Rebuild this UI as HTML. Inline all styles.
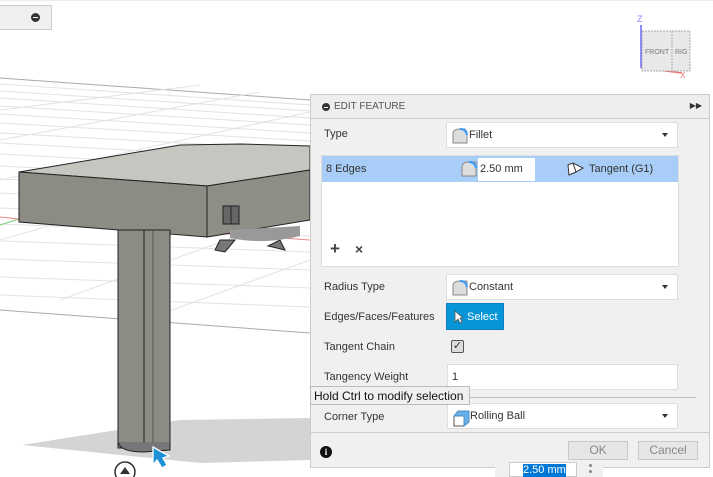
<!DOCTYPE html>
<html><head><style>
*{margin:0;padding:0;box-sizing:border-box}
body{width:713px;height:477px;overflow:hidden;background:#fff;font-family:"Liberation Sans",Arial,sans-serif;font-size:11px;color:#333;position:relative}
.a{position:absolute}
.lbl{position:absolute;left:13px;font-size:11px;color:#333}
.dd{position:absolute;left:135px;width:232px;height:26px;background:#fff;border:1px solid #ddd;}
.dd .t{position:absolute;left:22px;top:6px}
.dd .ar{position:absolute;right:9px;top:10px;width:0;height:0;border-left:3px solid transparent;border-right:3px solid transparent;border-top:4px solid #333}
.ic{position:absolute;left:5px;top:5px}
.btn{position:absolute;top:441px;height:19px;border:1px solid #c8c8c8;background:#e6e6e6;color:#888;font-size:12px;text-align:center;line-height:17px}
</style></head><body>
<svg class="a" style="left:0;top:0" width="713" height="477">
<rect x="0" y="0" width="713" height="1" fill="#eee"/>
<g stroke="#e2e2e2" stroke-width="1">
<line x1="0" y1="78" x2="310" y2="100" stroke="#aaa"/>
<line x1="0" y1="84" x2="310" y2="105"/><line x1="0" y1="91" x2="310" y2="111"/><line x1="0" y1="98" x2="310" y2="118"/><line x1="0" y1="106" x2="310" y2="125"/><line x1="0" y1="114" x2="310" y2="133"/><line x1="0" y1="123" x2="310" y2="141"/><line x1="0" y1="133" x2="310" y2="150"/><line x1="0" y1="143" x2="310" y2="160"/><line x1="0" y1="154" x2="310" y2="171"/><line x1="0" y1="166" x2="310" y2="182"/><line x1="0" y1="179" x2="310" y2="194"/><line x1="0" y1="193" x2="310" y2="207"/><line x1="0" y1="208" x2="310" y2="221"/><line x1="0" y1="224" x2="310" y2="236"/><line x1="0" y1="241" x2="310" y2="252"/><line x1="0" y1="259" x2="310" y2="270"/><line x1="0" y1="277" x2="310" y2="288"/><line x1="0" y1="295" x2="310" y2="307"/>
<line x1="0" y1="110" x2="200" y2="85"/><line x1="0" y1="140" x2="260" y2="92"/><line x1="0" y1="180" x2="310" y2="112"/><line x1="0" y1="240" x2="310" y2="150"/><line x1="60" y1="300" x2="310" y2="210"/><line x1="150" y1="318" x2="310" y2="260"/>
<line x1="0" y1="310" x2="310" y2="333" stroke="#aaa"/>
</g>
<line x1="0" y1="225" x2="19" y2="219" stroke="#7c7"/>
<line x1="0" y1="217" x2="19" y2="219" stroke="#e88"/>
<line x1="215" y1="233" x2="310" y2="240" stroke="#e88"/>
<polygon points="22,445 180,420 310,418 310,460 200,463" fill="#d4d4d4"/>
<polygon points="19,172 180,145 240,144 310,146 310,170 207,186" fill="#c6c6c0" stroke="#222"/>
<polygon points="19,172 207,186 207,237 19,222" fill="#8c8b84" stroke="#222"/>
<polygon points="207,186 310,170 310,220 207,237" fill="#8e8d86" stroke="#222"/>
<rect x="223" y="206" width="16" height="18" fill="#666" stroke="#222"/>
<line x1="231" y1="206" x2="231" y2="224" stroke="#222"/>
<path d="M215,250 L220,240 L235,240 L225,252 Z M268,246 L280,240 L285,250 Z" fill="#777" stroke="#222"/>
<path d="M230,238 Q265,245 300,236 L300,226 L230,230Z" fill="#999"/>
<rect x="118" y="230" width="52" height="218" fill="#8c8b84" stroke="#222"/>
<line x1="144" y1="230" x2="144" y2="450" stroke="#222"/>
<line x1="153" y1="230" x2="153" y2="450" stroke="#555"/>
<path d="M118,442 Q120,452 144,452 L170,450 Q170,444 170,442" fill="#777" stroke="#222"/>
<path d="M153,447 L153,465 L157,460 L162,468 L167,465 L163,458 L169,456 Z" fill="#1e90d6" stroke="#fff" stroke-width="1.3"/>
<circle cx="125" cy="472" r="10" fill="#fff" stroke="#333" stroke-width="1.5"/>
<path d="M120,474 L125,467 L130,474Z" fill="#333"/>
<line x1="641" y1="25" x2="641" y2="68" stroke="#66f" stroke-width="1.5"/>
<text x="637" y="22" font-size="9" fill="#88f" font-family="Liberation Sans">Z</text>
<line x1="641" y1="68" x2="682" y2="73" stroke="#e77" stroke-width="1.5"/>
<text x="680" y="78" font-size="8" fill="#e77" font-family="Liberation Sans">X</text>
<rect x="642" y="31" width="48" height="40" fill="#e8e8e8" stroke="#aaa" stroke-dasharray="2,1"/>
<line x1="672" y1="31" x2="672" y2="71" stroke="#aaa" stroke-dasharray="2,1"/>
<text x="645" y="54" font-size="7" fill="#777" font-family="Liberation Sans">FRONT</text>
<text x="675" y="54" font-size="7" fill="#777" font-family="Liberation Sans">RIG</text>
</svg>
<div class="a" style="left:-2px;top:5px;width:54px;height:25px;background:#f0f0f0;border:1px solid #ccc"></div>
<div class="a" style="left:31px;top:13px;width:9px;height:9px;border-radius:50%;background:#333"><div style="position:absolute;left:2px;top:4px;width:5px;height:1px;background:#fff"></div></div>

<div class="a" style="left:310px;top:94px;width:400px;height:374px;background:#f0f0f0;border:1px solid #ccc">
 <div class="a" style="left:0;top:0;width:398px;height:24px;border-bottom:1px solid #ccc;background:#eee">
  <div class="a" style="left:11px;top:8px;width:8px;height:8px;border-radius:50%;background:#333"><div style="position:absolute;left:2px;top:3.5px;width:4px;height:1px;background:#fff"></div></div>
  <div class="a" style="left:23px;top:6px;color:#555;font-size:10px">EDIT FEATURE</div>
  <div class="a" style="right:7px;top:6px;font-size:8px;color:#333">&#9654;&#9654;</div>
 </div>
 <div class="lbl" style="top:33px">Type</div>
 <div class="dd" style="top:27px"><svg class="ic" width="16" height="16"><path d="M1,15 L1,6 Q1,1 8,1 L13,1 L15,4 L15,15 Z" fill="#ddd" stroke="#888"/><path d="M8,1 Q14,1 15,7" fill="none" stroke="#39f" stroke-width="2"/></svg><div class="t">Fillet</div><div class="ar"></div></div>
 <div class="a" style="left:10px;top:60px;width:358px;height:112px;background:#fff;border:1px solid #ddd">
  <div class="a" style="left:0;top:0;width:356px;height:26px;background:#a8cdf7"></div>
  <div class="a" style="left:4px;top:7px">8 Edges</div>
  <svg class="a" style="left:139px;top:5px" width="16" height="16"><path d="M1,15 L1,6 Q1,1 8,1 L15,1 L15,15 Z" fill="#ddd" stroke="#888"/><path d="M8,1 Q14,1 15,7" fill="none" stroke="#39f" stroke-width="2"/></svg>
  <div class="a" style="left:156px;top:2px;width:57px;height:23px;background:#fff;padding:5px 2px">2.50 mm</div>
  <svg class="a" style="left:245px;top:6px" width="18" height="14"><path d="M2,13 L1,3 L6,1 L16,6 L9,10 Z" fill="#fff" stroke="#333"/><path d="M6,1 L9,10" stroke="#333"/></svg>
  <div class="a" style="left:267px;top:7px">Tangent (G1)</div>
  <div class="a" style="left:8px;top:86px;font-size:17px;font-weight:bold;color:#444;line-height:14px">+</div>
  <div class="a" style="left:33px;top:86px;font-size:14px;font-weight:bold;color:#444;line-height:14px">×</div>
 </div>
 <div class="lbl" style="top:186px">Radius Type</div>
 <div class="dd" style="top:179px"><svg class="ic" width="16" height="16"><path d="M1,15 L1,6 Q1,1 8,1 L15,1 L15,15 Z" fill="#ddd" stroke="#888"/><path d="M8,1 Q14,1 15,7" fill="none" stroke="#39f" stroke-width="2"/></svg><div class="t">Constant</div><div class="ar"></div></div>
 <div class="lbl" style="top:216px">Edges/Faces/Features</div>
 <div class="a" style="left:135px;top:208px;width:58px;height:27px;background:#0696d7;border:1px solid #0a7fbf;color:#fff;padding:7px 0 0 20px">Select</div>
 <svg class="a" style="left:143px;top:215px" width="10" height="14"><path d="M1,1 L1,12 L4,9 L6,13 L8,12 L6,8 L9,8 Z" fill="#fff" stroke="#555" stroke-width=".8"/></svg>
 <div class="lbl" style="top:246px">Tangent Chain</div>
 <div class="a" style="left:140px;top:245px;width:13px;height:13px;border:1px solid #555;border-radius:2px;background:#ddd;font-size:11px;line-height:11px;text-align:center">✓</div>
 <div class="lbl" style="top:276px">Tangency Weight</div>
 <div class="a" style="left:136px;top:269px;width:231px;height:26px;background:#fff;border:1px solid #ddd;padding:6px 4px">1</div>
 <div class="a" style="left:159px;top:302px;width:226px;height:1px;background:#bbb"></div>
 <div class="lbl" style="top:316px">Corner Type</div>
 <div class="dd" style="left:136px;top:308px;width:231px"><svg class="ic" width="18" height="18"><rect x="1" y="7" width="10" height="10" fill="#fff" stroke="#555"/><path d="M1,7 L5,2 L16,2 L16,13 L11,17 L11,7 Z" fill="#6ab0e8" stroke="#4a90c8"/></svg><div class="t">Rolling Ball</div><div class="ar"></div></div>
 <div class="a" style="left:0;top:337px;width:398px;height:1px;background:#ccc"></div>
 <div class="a" style="left:9px;top:351px;width:12px;height:12px;border-radius:50%;background:#111;color:#fff;font-size:9px;font-weight:bold;text-align:center;line-height:12px;font-family:'Liberation Serif',serif">i</div>
</div>
<div class="btn" style="left:568px;width:60px">OK</div>
<div class="btn" style="left:638px;width:60px">Cancel</div>
<div class="a" style="left:310px;top:386px;width:160px;height:19px;background:#f0f0f0;border:1px solid #bbb;color:#111;font-size:12px;padding:2px 0 0 3px">Hold Ctrl to modify selection</div>
<div class="a" style="left:495px;top:462px;width:108px;height:15px;background:#f0f0f0"></div>
<div class="a" style="left:509px;top:462px;width:68px;height:15px;background:#fff;border:1px solid #ccc"><span style="position:absolute;left:13px;top:1px;background:#0078d7;color:#fff;font-size:11px;line-height:13px">2.50 mm</span></div>
<div class="a" style="left:589px;top:464px;width:3px;height:3px;background:#888;border-radius:50%"></div>
<div class="a" style="left:589px;top:470px;width:3px;height:3px;background:#888;border-radius:50%"></div>
</body></html>
